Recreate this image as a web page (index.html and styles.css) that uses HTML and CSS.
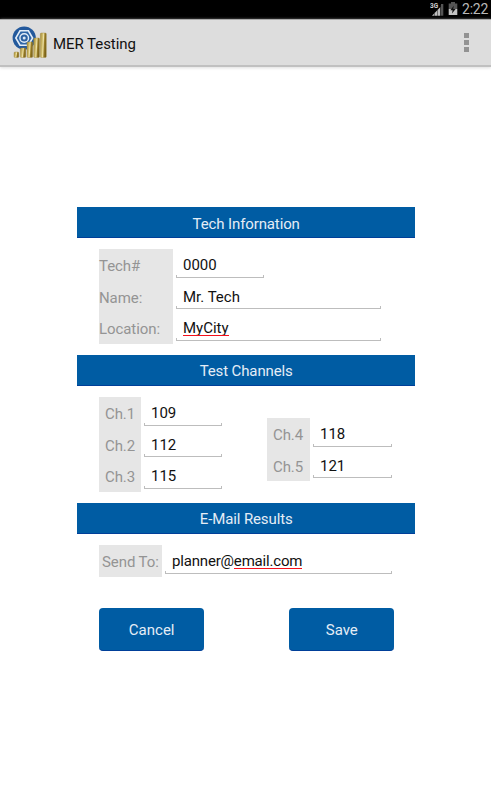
FILE: index.html
```html
<!DOCTYPE html>
<html lang="en">
<head>
<meta charset="utf-8">
<title>MER Testing</title>
<link rel="stylesheet" href="styles.css">
</head>
<body>
<div class="status">
  <svg class="signal" width="14" height="16" viewBox="0 0 14 16">
    <path d="M2 14.7 10.4 6v8.7z" fill="#bdbdbd"/>
    <path d="M4.500 11v4M7.500 8v7M10.700 4v11" stroke="#222" stroke-width=".5"/>
    <path d="M11 3h2.300v11.700H11z" fill="#555"/>
    <text x="0" y="6.800" class="net">3G</text>
  </svg>
  <svg class="battery" width="10" height="14" viewBox="0 0 10 14">
    <path d="M3 0h4v1.500h2.300V7H.7V1.500H3z" fill="#555"/>
    <path d="M.7 7h8.600v6H.7z" fill="#c4c4c4"/>
    <path d="M5.800 3.800 2.300 8.300h2.300L4 11.500l3.600-4.400H5.200z" fill="#111"/>
  </svg>
  <span class="clock">2:22</span>
</div>
<header class="bar">
  <svg class="logo" width="36" height="34" viewBox="0 0 36 34">
    <defs><linearGradient id="gold" x1="0" y1="0" x2="1" y2=".2">
      <stop offset="0" stop-color="#a08732"/><stop offset=".4" stop-color="#d2bf70"/><stop offset=".55" stop-color="#efe2a5"/><stop offset=".75" stop-color="#9a7e27"/><stop offset="1" stop-color="#786019"/>
    </linearGradient></defs>
    <circle cx="12.200" cy="12" r="11.600" fill="#23599c"/>
    <path d="M8 4.800h8.400l4.200 7.200-4.200 7.200H8L3.800 12z" fill="#2e66a7" stroke="#e3edf7" stroke-width="1.600"/>
    <circle cx="12.200" cy="12" r="4.300" fill="#2b61a1" stroke="#e3edf7" stroke-width="1.400"/>
    <circle cx="12.200" cy="12" r="1.500" fill="#dce8f3"/>
    <g fill="url(#gold)" stroke="#a38c3d" stroke-width=".4">
      <rect x="2" y="26" width="4.800" height="5.500" rx="1"/>
      <rect x="8.300" y="22" width="5.500" height="9.500" rx="1"/>
      <rect x="15" y="16" width="5.700" height="15.500" rx="1"/>
      <rect x="21.700" y="12" width="5.800" height="19.500" rx="1"/>
      <rect x="28.300" y="7" width="6" height="24.500" rx="1"/>
    </g>
  </svg>
  <h1 class="title">MER Testing</h1>
  <div class="overflow"><i></i><i></i><i></i></div>
</header>
<main class="form">
  <h2 class="banner first">Tech Infornation</h2>
  <section class="group tech">
    <div class="labels"><span>Tech#</span><span>Name:</span><span>Location:</span></div>
    <div class="fields">
      <div class="cell short"><span class="field">0000</span></div>
      <div class="cell"><span class="field">Mr. Tech</span></div>
      <div class="cell"><span class="field"><u>MyCity</u></span></div>
    </div>
  </section>
  <h2 class="banner">Test Channels</h2>
  <section class="group channels">
    <div class="column">
      <div class="labels"><span>Ch.1</span><span>Ch.2</span><span>Ch.3</span></div>
      <div class="fields">
        <div class="cell"><span class="field">109</span></div>
        <div class="cell"><span class="field">112</span></div>
        <div class="cell"><span class="field">115</span></div>
      </div>
    </div>
    <div class="column right">
      <div class="labels"><span>Ch.4</span><span>Ch.5</span></div>
      <div class="fields">
        <div class="cell"><span class="field">118</span></div>
        <div class="cell"><span class="field">121</span></div>
      </div>
    </div>
  </section>
  <h2 class="banner">E-Mail Results</h2>
  <section class="group email">
    <div class="labels"><span>Send To:</span></div>
    <div class="fields"><div class="cell"><span class="field">planner@<u>email.com</u></span></div></div>
  </section>
  <div class="actions"><button class="btn">Cancel</button><button class="btn">Save</button></div>
</main>
</body>
</html>
```
FILE: styles.css
```css
* { box-sizing: border-box; }
body {
  margin: 0;
  height: 800px;
  background: #fff;
  color: #111;
  font: 15px/20px Roboto, sans-serif;
  overflow: hidden;
}
.status {
  height: 19px;
  background: #000;
  display: flex;
  justify-content: flex-end;
  align-items: flex-start;
  padding-right: 3px;
}
.signal { margin: 1px 4px 0 0; }
.net { font: bold 6.5px Roboto, sans-serif; fill: #d0d0d0; }
.battery { margin: 2px 4px 0 0; }
.clock { color: #b9b9b9; font-size: 14px; line-height: 19px; width: 26px; white-space: nowrap; letter-spacing: -0.2px; }
.bar {
  height: 48px;
  display: flex;
  align-items: center;
  background: #ddd;
  border-top: 1px solid #aaa;
  border-bottom: 2px solid #c0c0c0;
  box-shadow: 0 1px 3px #ddd;
  padding: 0 22px 0 12px;
}
.logo { margin-top: 1px; }
.title { margin: 2px auto 0 5px; font-size: 15px; font-weight: 400; letter-spacing: -0.05px; }
.overflow { display: flex; flex-direction: column; gap: 2px; }
.overflow i { width: 5px; height: 5px; background: #929292; }
.form { width: 337.6px; margin: 140px 0 0 77.4px; }
.banner {
  margin: 0;
  height: 31px;
  line-height: 33px;
  text-align: center;
  background: #005ca3;
  border-bottom: 1px solid #003f99;
  color: #e4edf6;
  font-size: 15px;
  font-weight: 400;
  letter-spacing: -0.12px;
}
.first { line-height: 34px; }
.group, .column { display: flex; }
.group { padding: 11px 0 11px 21.6px; }
.labels, .fields { display: grid; grid-auto-rows: 31.67px; }
.labels { background: #e6e6e6; color: #949494; align-content: start; }
.labels span { line-height: 34px; padding-left: 6px; letter-spacing: -0.08px; }
.fields { margin-left: 3px; }
.cell { padding-bottom: 3px; }
.field {
  display: block;
  position: relative;
  height: 28.67px;
  line-height: 32.5px;
  padding-left: 7px;
  border-bottom: 1px solid #bdbdbd;
}
.field::before, .field::after {
  content: "";
  position: absolute;
  bottom: 0;
  width: 1px;
  height: 2px;
  background: #bdbdbd;
}
.field::before { left: 0; }
.field::after { right: 0; }
.field u { position: relative; text-decoration: none; }
.field u::after {
  content: "";
  position: absolute;
  left: 0;
  right: 0;
  bottom: 1px;
  height: 1px;
  background: #f5101c;
}
.tech .labels { width: 74px; }
.tech .labels span { padding-left: 0; }
.tech .fields { width: 205px; }
.short { width: 88px; }
.channels .labels { width: 42px; }
.channels .fields { width: 78px; }
.right { margin: 21px 0 0 45px; height: 63.34px; }
.right .labels { width: 43px; }
.right .fields { width: 79px; }
.email .labels { width: 63px; }
.email .labels span { padding-left: 3px; }
.email .fields { width: 227px; letter-spacing: -0.18px; }
.actions { display: flex; justify-content: space-between; padding: 20px 20.5px 0 21.6px; }
.btn {
  width: 105.4px;
  height: 43px;
  padding: 3px 0 0;
  border: 0;
  border-bottom: 1px solid #003f99;
  border-radius: 4px;
  background: #005ca3;
  color: #e4edf6;
  font: 15px Roboto, sans-serif;
}
```
